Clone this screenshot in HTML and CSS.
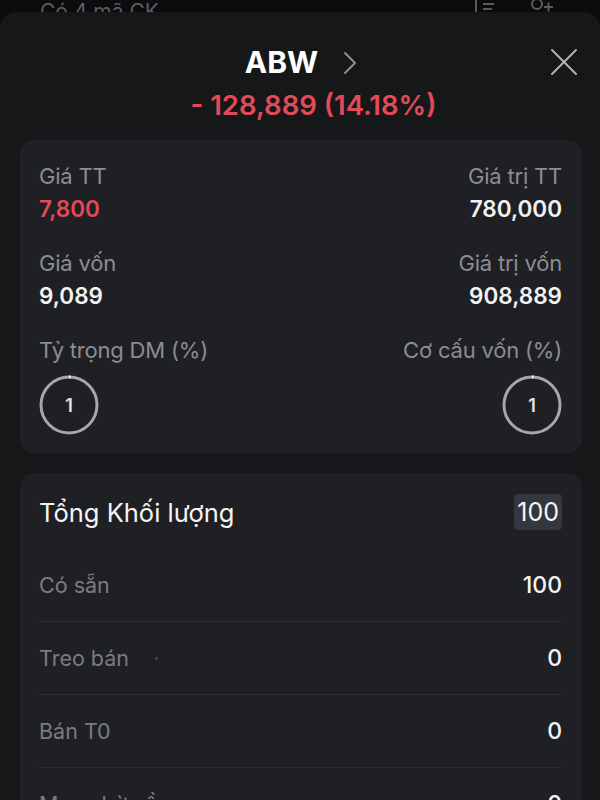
FILE: index.html
```html
<!DOCTYPE html>
<html>
<head>
<title>ABW</title>
<link rel="stylesheet" href="styles.css">
</head>
<body>
	<div class="behind">
		<span class="behind-title">Có 4 mã CK</span>
		<div class="behind-icons">
			<svg width="24" height="20" viewBox="0 0 24 20" fill="none" stroke="#5a5a5e" stroke-width="2">
				<path d="M4 0v16M11 4h11M11 9h9M11 14h7"/>
			</svg>
			<svg width="24" height="20" viewBox="0 0 24 20" fill="none" stroke="#5a5a5e" stroke-width="2">
				<circle cx="7" cy="4" r="5"/>
				<path d="M14 7h9M18.5 2.5v9"/>
			</svg>
		</div>
	</div>
	<div class="sheet">
		<header class="sheet-head">
			<div></div>
			<div class="ticker">
				<span>ABW</span>
				<svg width="14" height="24" viewBox="0 0 14 24" fill="none" stroke="#8e8e92" stroke-width="2" stroke-linecap="round" stroke-linejoin="round">
					<path d="M2 2l10 10-10 10"/>
				</svg>
			</div>
			<button class="close" type="button">
				<svg width="28" height="28" viewBox="0 0 28 28" fill="none" stroke="#b3b3b6" stroke-width="2" stroke-linecap="round">
					<path d="M2 2l24 24M26 2L2 26"/>
				</svg>
			</button>
			<div class="change">- 128,889 (14.18%)</div>
		</header>

		<section class="card summary">
			<div class="item">
				<span class="label">Giá TT</span>
				<span class="value red">7,800</span>
			</div>
			<div class="item right">
				<span class="label">Giá trị TT</span>
				<span class="value">780,000</span>
			</div>
			<div class="item">
				<span class="label">Giá vốn</span>
				<span class="value">9,089</span>
			</div>
			<div class="item right">
				<span class="label">Giá trị vốn</span>
				<span class="value">908,889</span>
			</div>
			<div class="item">
				<span class="label">Tỷ trọng DM (%)</span>
				<div class="ring">
					<svg width="60" height="60" viewBox="0 0 60 60" fill="none">
						<circle cx="30" cy="30" r="28" stroke="#a7a7aa" stroke-width="3"/>
						<path d="M30 2a28 28 0 0 1 1.5 0" stroke="#ffffff" stroke-width="3"/>
					</svg>
					<span>1</span>
				</div>
			</div>
			<div class="item right">
				<span class="label">Cơ cấu vốn (%)</span>
				<div class="ring">
					<svg width="60" height="60" viewBox="0 0 60 60" fill="none">
						<circle cx="30" cy="30" r="28" stroke="#a7a7aa" stroke-width="3"/>
						<path d="M30 2a28 28 0 0 1 1.5 0" stroke="#ffffff" stroke-width="3"/>
					</svg>
					<span>1</span>
				</div>
			</div>
		</section>

		<section class="card volume">
			<div class="volume-head">
				<span class="volume-title">Tổng Khối lượng</span>
				<span class="badge">100</span>
			</div>
			<div class="row">
				<span class="row-label">Có sẵn</span>
				<span class="row-value">100</span>
			</div>
			<div class="row">
				<span class="row-label">Treo bán <i class="dot"></i></span>
				<span class="row-value">0</span>
			</div>
			<div class="row">
				<span class="row-label">Bán T0</span>
				<span class="row-value">0</span>
			</div>
			<div class="row">
				<span class="row-label">Mua chờ về</span>
				<span class="row-value">0</span>
			</div>
		</section>
	</div>
</body>
</html>
```

FILE: styles.css
```css
html, body {
	margin: 0;
	height: 100%;
}
body {
	font-family: Inter, "Noto Sans", sans-serif;
	background-color: #0c0c0e;
	color: #f0f0f2;
	overflow: hidden;
}
.behind {
	height: 12px;
	overflow: hidden;
	display: flex;
	justify-content: space-between;
	padding: 0 46px 0 40px;
}
.behind-title {
	font-size: 21px;
	line-height: 20px;
	padding-top: 2px;
	color: #5c5c60;
}
.behind-icons {
	display: flex;
	gap: 34px;
}
.sheet {
	background-color: #161719;
	border-radius: 16px 16px 0 0;
	height: 788px;
	padding: 0 18px 0 20px;
}
.sheet-head {
	display: grid;
	grid-template-columns: 1fr auto 1fr;
	align-items: center;
	padding-top: 32px;
}
.ticker {
	display: flex;
	align-items: center;
	gap: 25px;
	font-size: 30px;
	font-weight: 700;
	line-height: 36px;
	color: #ffffff;
}
.ticker svg {
	margin-top: 2px;
}
.close {
	justify-self: end;
	background: none;
	border: none;
	padding: 0;
	margin-right: 4px;
	display: flex;
}
.change {
	grid-column: 1 / -1;
	text-align: center;
	font-size: 27.5px;
	font-weight: 600;
	line-height: 32px;
	margin-top: 9px;
	padding-left: 25px;
	color: #e24a57;
}
.card {
	background-color: #1f2023;
	border-radius: 14px;
}
.summary {
	margin-top: 19px;
	padding: 24px 20px 18px 19px;
	display: grid;
	grid-template-columns: 1fr 1fr;
	row-gap: 29px;
}
.item {
	display: flex;
	flex-direction: column;
	align-items: flex-start;
	gap: 8px;
}
.item.right {
	align-items: flex-end;
}
.label {
	font-size: 22px;
	letter-spacing: -0.2px;
	line-height: 24px;
	color: #8c8d91;
}
.value {
	font-size: 22.5px;
	font-weight: 600;
	line-height: 26px;
	color: #f2f2f4;
}
.value.red {
	color: #e24a57;
}
.ring {
	position: relative;
	width: 60px;
	height: 60px;
	margin-top: 5px;
	display: flex;
	align-items: center;
	justify-content: center;
}
.ring svg {
	position: absolute;
	top: 0;
	left: 0;
}
.ring span {
	font-size: 18px;
	font-weight: 600;
	color: #e4e4e6;
}
.volume {
	margin-top: 20px;
	padding: 20px 20px 0 19px;
}
.volume-head {
	display: flex;
	justify-content: space-between;
	align-items: center;
	height: 38px;
	margin-bottom: 18px;
}
.volume-title {
	font-size: 25.5px;
	color: #f4f4f6;
}
.badge {
	background-color: #34373b;
	border-radius: 4px;
	padding: 2px 3px;
	font-size: 25px;
	line-height: 32px;
	color: #f4f4f6;
}
.row {
	display: flex;
	justify-content: space-between;
	align-items: center;
	height: 72px;
	border-bottom: 1px solid #2d2f33;
}
.row-label {
	font-size: 21.5px;
	color: #7b7c80;
	display: flex;
	align-items: center;
	gap: 26px;
}
.row-value {
	font-size: 23px;
	font-weight: 500;
	color: #f2f2f4;
}
.dot {
	width: 3px;
	height: 3px;
	border-radius: 50%;
	background-color: #4a4b4f;
}
```
